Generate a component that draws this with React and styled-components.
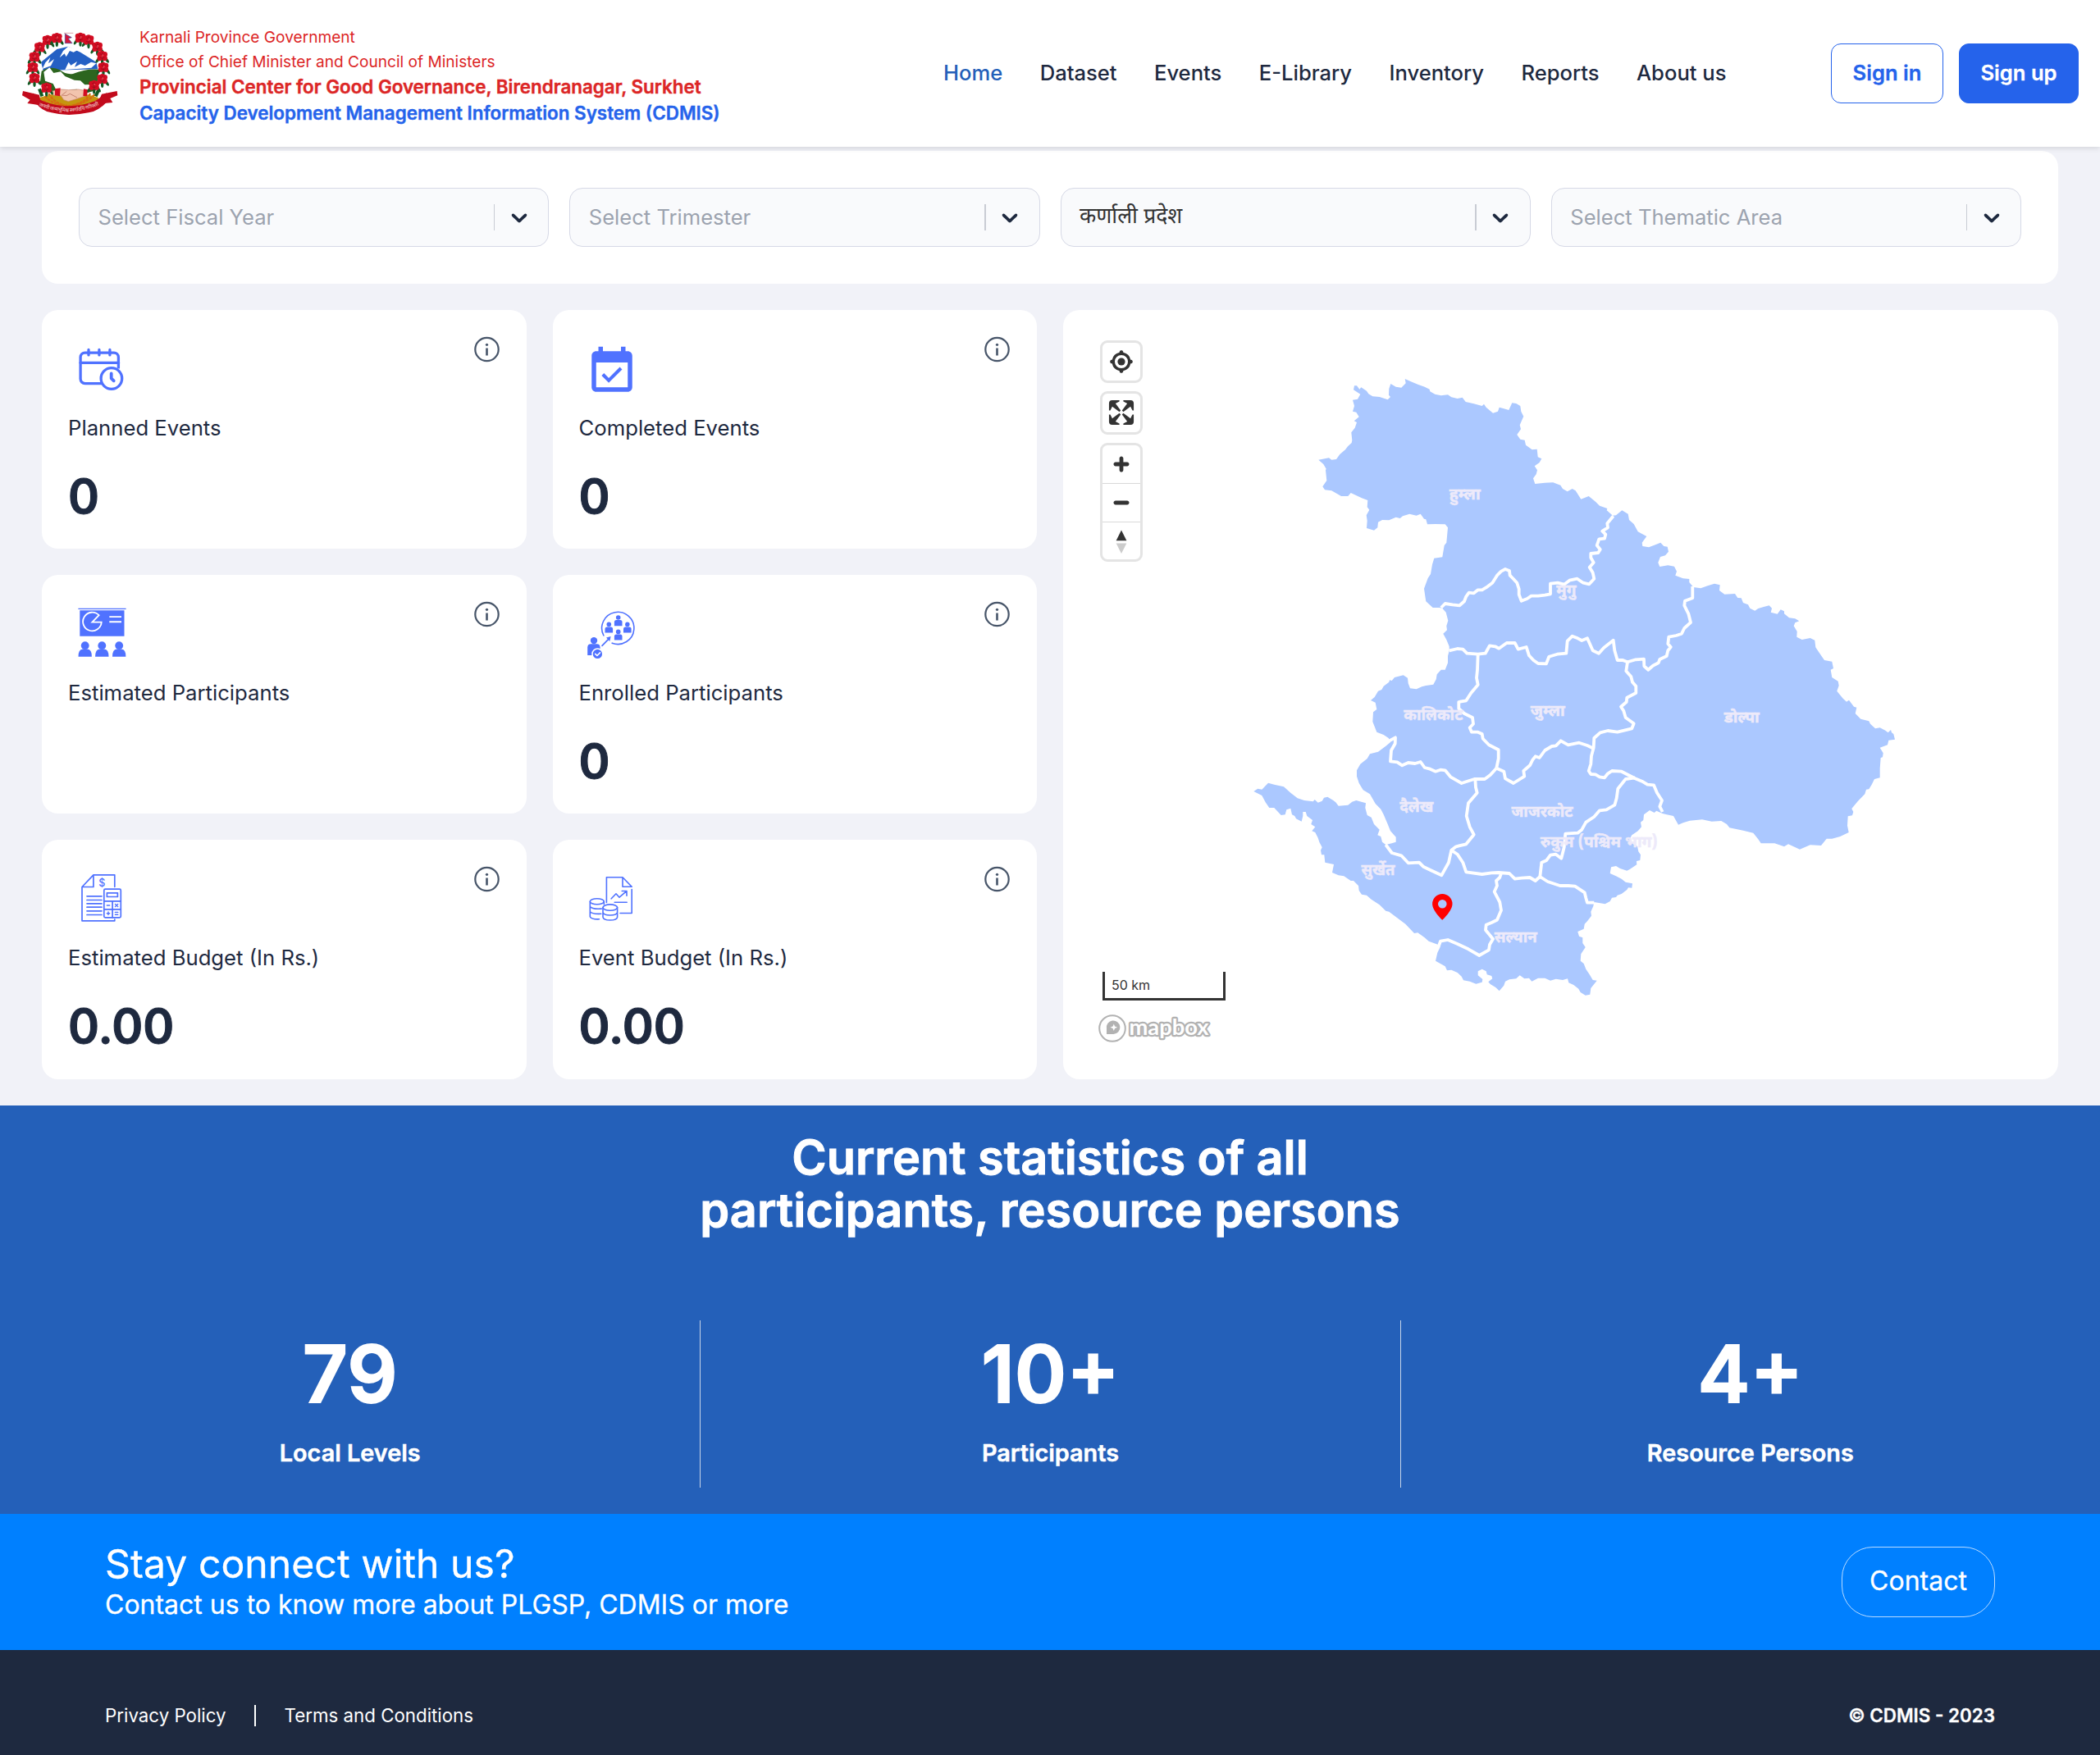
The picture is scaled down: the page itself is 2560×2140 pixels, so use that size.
import React from "react";
import styled, { createGlobalStyle } from "styled-components";

const FONT = `Inter, "Noto Sans Devanagari", "Noto Sans", sans-serif`;
const NAVY = "#1e293f";
const ACCENT = "#5072ff";

const GlobalStyle = createGlobalStyle`
  *, *::before, *::after { box-sizing: border-box; }
  body { margin: 0; background: #f1f2f8; color: ${NAVY}; font-family: ${FONT}; }
  a { color: inherit; text-decoration: none; }
`;

/* ---------- header ---------- */

const Header = styled.header`
  position: relative;
  display: flex;
  align-items: center;
  height: 179px;
  padding: 0 26px 0 16px;
  background: #fff;
  box-shadow: 0 2px 6px rgba(0, 0, 0, 0.12);
`;

const Brand = styled.div`
  display: flex;
  align-items: center;
  gap: 14px;
`;

const BrandText = styled.div`
  padding-top: 6px;
  white-space: nowrap;
`;

const BrandLine = styled.div`
  color: ${(p) => p.$color};
  font-size: ${(p) => (p.$strong ? 22.4 : 19.1)}px;
  line-height: ${(p) => (p.$strong ? 32 : 29.2)}px;
  font-weight: ${(p) => (p.$strong ? 600 : 400)};
  -webkit-text-stroke: ${(p) => (p.$strong ? 0.4 : 0)}px currentColor;
`;

const Nav = styled.nav`
  display: flex;
  gap: 45.4px;
  margin-left: auto;
  margin-right: 127.5px;
`;

const NavLink = styled.a`
  padding-bottom: 2px;
  font-size: 25.6px;
  line-height: 38px;
  font-weight: 500;
  color: ${(p) => (p.$active ? "#2460b9" : NAVY)};
`;

const Actions = styled.div`
  display: flex;
  gap: 19px;
`;

const AuthButton = styled.button`
  height: 73px;
  width: ${(p) => p.$width}px;
  padding: 0 0 2px;
  border: 1.5px solid #2563eb;
  border-radius: 12px;
  background: ${(p) => (p.$filled ? "#2563eb" : "#fff")};
  color: ${(p) => (p.$filled ? "#fff" : "#2563eb")};
  font: 600 25.6px ${FONT};
  -webkit-text-stroke: 0.3px currentColor;
`;

/* ---------- dashboard ---------- */

const Dashboard = styled.main`
  padding: 5px 51px 32px;
`;

const Filters = styled.section`
  display: grid;
  grid-template-columns: repeat(4, 1fr);
  gap: 25px;
  height: 162px;
  padding: 45px;
  border-radius: 20px;
  background: #fff;
`;

const Select = styled.div`
  display: flex;
  align-items: center;
  height: 72px;
  padding: 0 19.5px 0 22.5px;
  border: 1px solid #d6d9e6;
  border-radius: 16px;
  background: #f9fafc;
  color: ${(p) => (p.$filled ? "#333" : "#9ca3af")};
  font-size: ${(p) => (p.$filled ? 26.4 : 25.6)}px;
`;

const SelectText = styled.span`
  flex: 1;
  padding-bottom: 1px;
`;

const SelectBar = styled.span`
  width: 1.5px;
  height: 32px;
  margin-right: 13.5px;
  background: #c9ccd4;
`;

const Grid = styled.section`
  display: grid;
  grid-template-columns: repeat(4, 1fr);
  grid-template-rows: repeat(3, 291.2px);
  gap: 32px;
  margin-top: 32px;
`;

const Card = styled.article`
  display: flex;
  justify-content: space-between;
  align-items: flex-start;
  padding: 32px;
  border-radius: 20px;
  background: #fff;
`;

const CardBody = styled.div`
  padding-top: 9.5px;
`;

const IconSlot = styled.div`
  height: 66px;
  padding-left: 7.5px;
  svg { display: block; overflow: visible; }
`;

const CardLabel = styled.div`
  margin-top: 17px;
  font-size: 25.7px;
  line-height: 38.4px;
`;

const CardValue = styled.div`
  margin-top: 32px;
  font-size: 57.6px;
  line-height: 64px;
  font-weight: 600;
  -webkit-text-stroke: 1px currentColor;
`;

/* ---------- map ---------- */

const MapCard = styled.article`
  position: relative;
  grid-column: 3 / 5;
  grid-row: 1 / 4;
  display: flex;
  flex-direction: column;
  justify-content: space-between;
  padding: 37px 0 43.5px 45px;
  border-radius: 20px;
  background: #fff;
  overflow: hidden;
`;

const MapCanvas = styled.svg`
  position: absolute;
  left: 0;
  top: 0;
`;

const MapControls = styled.div`
  position: relative;
  display: flex;
  flex-direction: column;
  align-items: flex-start;
  gap: 10px;
`;

const ControlGroup = styled.div`
  width: 52px;
  border: 3px solid #e4e4e4;
  border-radius: 9px;
  background: #fff;
`;

const ControlButton = styled.div`
  width: 46px;
  height: 46.4px;
  & + & { border-top: 1px solid #d9d9d9; }
  svg { display: block; }
`;

const MapLegend = styled.div`
  position: relative;
  svg { display: block; margin-left: -3px; }
`;

const ScaleBar = styled.div`
  width: 150px;
  height: 35px;
  margin: 0 0 16px 3px;
  padding-left: 8px;
  border: 3px solid #333;
  border-top: 0;
  color: #333;
  font-size: 16px;
  line-height: 32px;
`;

/* ---------- statistics ---------- */

const Stats = styled.section`
  height: 498px;
  padding-top: 31px;
  background: #2460b9;
  color: #fff;
  text-align: center;
`;

const StatsTitle = styled.h2`
  margin: 0;
  font-size: 57.6px;
  line-height: 64px;
  font-weight: 600;
  -webkit-text-stroke: 1px currentColor;
`;

const StatsRow = styled.div`
  display: grid;
  grid-template-columns: repeat(3, 1fr);
  margin-top: 103px;
`;

const Stat = styled.div`
  height: 204px;
  padding-top: 17px;
  & + & { border-left: 1.5px solid #c5d3e8; }
`;

const StatNumber = styled.div`
  font-size: 96px;
  line-height: 96px;
  font-weight: 600;
  -webkit-text-stroke: 1.8px currentColor;
`;

const StatLabel = styled.div`
  margin-top: 27px;
  font-size: 28.8px;
  line-height: 44px;
  font-weight: 600;
  -webkit-text-stroke: 0.5px currentColor;
`;

/* ---------- contact and footer ---------- */

const ContactBand = styled.section`
  display: flex;
  align-items: center;
  justify-content: space-between;
  height: 166px;
  padding: 0 128px;
  background: #0080ff;
  color: #fff;
`;

const ContactCopy = styled.div`
  padding-bottom: 2px;
  -webkit-text-stroke: 0.3px currentColor;
`;

const ContactTitle = styled.div`
  font-size: 48.2px;
  line-height: 58px;
`;

const ContactText = styled.div`
  font-size: 32px;
  line-height: 42px;
`;

const ContactButton = styled.button`
  width: 187px;
  height: 86px;
  padding: 0 0 2px;
  border: 1.5px solid #b9dbff;
  border-radius: 38px;
  background: transparent;
  color: #fff;
  font: 400 32px ${FONT};
  -webkit-text-stroke: 0.3px currentColor;
`;

const Footer = styled.footer`
  display: flex;
  align-items: center;
  height: 128px;
  padding: 32px 128px 0;
  background: ${NAVY};
  color: #fff;
  font-size: 22.3px;
  line-height: 32px;
`;

const FooterBar = styled.span`
  width: 2px;
  height: 26px;
  margin: 0 34.5px;
  background: #fff;
`;

const Copyright = styled.span`
  margin-left: auto;
  font-size: 22.4px;
  font-weight: 600;
  -webkit-text-stroke: 0.3px currentColor;
`;

/* ---------- emblem ---------- */

const FLOWERS = [
  [126, 57], [160, 49], [97, 83], [78, 118], [72, 156], [78, 196], [122, 231],
  [246, 48], [276, 56], [308, 81], [326, 115], [330, 156], [326, 199], [296, 222],
];

const Flower = ({ x, y }) => (
  <g transform={`translate(${x} ${y})`}>
    <g fill="#125a24">
      <ellipse cx="-16" cy="14" rx="5" ry="13" transform="rotate(35 -16 14)" />
      <ellipse cx="16" cy="14" rx="5" ry="13" transform="rotate(-35 16 14)" />
      <ellipse cx="0" cy="20" rx="5" ry="12" />
    </g>
    <g fill="#d30d22">
      <circle cx="-9" cy="-6" r="10" />
      <circle cx="9" cy="-6" r="10" />
      <circle cx="-9" cy="8" r="9.5" />
      <circle cx="9" cy="8" r="9.5" />
      <circle cx="0" cy="-10" r="9" />
    </g>
    <path d="M-8-8q8 8 16 0M-9 5q9 7 18 0M0-14v26" stroke="#93071a" strokeWidth="2" fill="none" />
    <circle cx="2" cy="-3" r="3" fill="#ef4a55" />
  </g>
);

const Emblem = () => (
  <svg width="140" height="120" viewBox="0 0 420 360">
    <path d="M186 31h34M193 33v36" stroke="#d9a0ab" strokeWidth="3" />
    <path d="M190 34 214 47 202 51 216 68H190z" fill="#d2143a" stroke="#3b4d9b" strokeWidth="2" />
    <path d="M102 137 160 90 201 80 246 101 304 137 310 163 110 168z" fill="#2460c4" />
    <path d="M201 80 183 96 170 121 188 106 194 118 207 96 221 101 236 93zM118 139l18-19-7 22 21-16-12 25-31 11zM190 165l13-28 8 12 23-14-9 20 22-11 16 6 22-13 19 5-18 16z" fill="#fff" />
    <path d="M104 170q36-22 67-4 22 18 48 14 46-20 95-16l-10 76-54 16-110-10-42-30z" fill="#2c651f" />
    <path d="M112 173 133 157 148 177 174 172 190 189 224 203 246 205 262 220 292 219 286 238 243 242 232 236 204 241 156 236 146 216 117 206z" fill="#fff" />
    <path d="M94 268q115-38 218 0l-10 40q-100 36-198-4z" fill="#c5960f" />
    <path d="M116 262q34 35 82 34M298 256q-40 40-104 42M130 252q18 33 58 43M282 252q-20 36-66 43M110 279q38 23 78 20M308 277q-44 25-92 21" fill="none" stroke="#d56b10" strokeWidth="7" strokeDasharray="11 3" />
    <path d="M140 244 174 237 203 239 238 237 262 241 262 262 231 272 202 281 185 275 174 259 146 258z" fill="#f2c4ad" stroke="#c88570" strokeWidth="2" />
    <path d="M196 244l-18 14 17 2 13-7 26 14" fill="none" stroke="#c88570" strokeWidth="3" />
    <path d="M153 235 173 232 171 262 153 259zM258 235l15 3-3 24-14-1z" fill="#d30d22" />
    <path d="M106 262 96 235M302 262l10-22" stroke="#125a24" strokeWidth="12" />
    {FLOWERS.map(([x, y]) => <Flower key={`${x}-${y}`} x={x} y={y} />)}
    <path d="M36 243 96 257 102 296 78 292 52 288 62 275 33 259zM380 243 324 254 306 296 340 287 364 285 355 270 382 259z" fill="#c20a1c" />
    <path d="M72 250Q92 274 112 281 205 315 300 280L342 250 348 278Q310 318 276 322 200 338 140 322 104 316 82 284z" fill="#c20a1c" />
    <path id="motto" d="M94 297Q206 343 322 291" fill="none" />
    <text fill="#efc4c2" fontSize="18.5" fontFamily="Noto Sans Devanagari, Noto Sans, sans-serif" fontWeight="500">
      <textPath href="#motto" textLength="226">जननी जन्मभूमिश्च स्वर्गादपि गरीयसी</textPath>
    </text>
  </svg>
);

/* ---------- icons ---------- */

const Glyph = ({ children }) => (
  <svg width="66" height="66" viewBox="0 0 66 66" fill="none" stroke={ACCENT} strokeLinecap="round" strokeLinejoin="round">
    {children}
  </svg>
);

const PlannedIcon = () => (
  <Glyph>
    <g strokeWidth="3.3">
      <path d="M33.5 47.6H12.6a5.5 5.5 0 0 1-5.5-5.5V15.6a5.5 5.5 0 0 1 5.5-5.5h35.3a5.5 5.5 0 0 1 5.5 5.5V29.5" strokeLinecap="butt" />
      <path d="M7.1 22.3h46.3" />
      <path d="M17 6.5v6.4M29.9 6.5v6.4M42.9 6.5v6.4" />
      <circle cx="44.9" cy="41.5" r="12.8" />
      <path d="M44.7 35.5v5.8l3 3" strokeWidth="3.8" />
    </g>
  </Glyph>
);

const CompletedIcon = () => (
  <svg width="66" height="66" viewBox="0 0 24 24" fill={ACCENT}>
    <path d="M16.53 11.06L15.47 10l-4.88 4.88-2.12-2.12-1.06 1.06L10.59 17l5.94-5.94zM19 3h-1V1h-2v2H8V1H6v2H5c-1.11 0-1.99.9-1.99 2L3 19c0 1.1.89 2 2 2h14c1.1 0 2-.9 2-2V5c0-1.1-.9-2-2-2zm0 16H5V8h14v11z" />
  </svg>
);

const EstimatedIcon = () => (
  <Glyph>
    <path d="M4.4-.6h58.2" strokeWidth="1.4" strokeLinecap="butt" />
    <path d="M6.3 1.2h54.2v31.6H6.3z" fill={ACCENT} stroke="none" />
    <path d="M32.7 15.7A11.3 11.3 0 1 1 29.6 7.2L21.4 15.7z" stroke="#fff" strokeWidth="1.8" strokeLinejoin="miter" />
    <path d="M42.3 9.1H57M42.3 15.3H57" stroke="#fff" strokeWidth="1.9" strokeLinecap="butt" />
    {[12.7, 33.3, 54.2].map((x) => (
      <g key={x} fill={ACCENT} stroke="none">
        <circle cx={x} cy="44.2" r="4.9" />
        <path d={`M${x - 8.2} 57.8q0-9 5.2-9.3h6q5.2 .3 5.2 9.3z`} />
      </g>
    ))}
  </Glyph>
);

const EnrolledIcon = () => (
  <Glyph>
    <path d="M22.9 32A19.6 19.6 0 1 1 33.2 41.2" strokeWidth="1.6" />
    <g fill={ACCENT} stroke="none">
      {[[40.7, 10], [29.3, 18.4], [51.8, 18.4], [40.7, 27.4]].map(([x, y]) => (
        <g key={`${x}-${y}`}>
          <circle cx={x} cy={y} r="2.8" />
          <path d={`M${x - 4.8} ${y + 10.2}v-4.6q0-2.5 2.5-2.5h4.6q2.5 0 2.5 2.5v4.6z`} />
        </g>
      ))}
      <circle cx="11" cy="38.1" r="4.2" />
      <path d="M3.2 56V46.5q0-4.3 4.3-4.3h7q4.1 0 4.1 4.3V56z" />
      <circle cx="15.4" cy="54.4" r="6.4" fill={ACCENT} stroke="#fff" strokeWidth="1.5" />
      <path d="M26 34.6l5.6-1.5-1.3 6z" />
    </g>
    <path d="M21 44.3l8-8.2" strokeWidth="1.7" />
    <path d="M12.7 54.4l2.2 2.1 3.6-3.6" stroke="#fff" strokeWidth="1.6" />
  </Glyph>
);

const EstimatedBudgetIcon = () => (
  <Glyph>
    <g strokeWidth="1.7">
      <path d="M48.8 15.3V.8H22.9L9 15.5v41.3h39.8V55M22.9 .8v14.7H9" />
      <rect x="35.8" y="18.2" width="20.5" height="34.6" rx="1.5" />
      <rect x="39.4" y="22.8" width="13" height="4.7" />
      <path d="M35.8 32.8h20.5M35.8 42.8h20.5M46.1 32.8v20" />
      <path d="M15 26.8h18M15 31.5h18M15 35.8h18M15 40.2h18M15 44.8h18M15 49.5h18" />
      <path d="M39.3 38h3.4M49.5 36.4l3.2 3.2M52.7 36.4l-3.2 3.2M39.3 47.7h3.4M41 46v3.4M49.4 46.4h3.4M49.4 49.2h3.4" strokeWidth="1.4" />
    </g>
    <text x="33.2" y="15" textAnchor="middle" fontSize="12.5" fontWeight="500" fontFamily="Inter, sans-serif" fill={ACCENT} stroke="none">$</text>
  </Glyph>
);

const EventBudgetIcon = () => (
  <Glyph>
    <g strokeWidth="1.6">
      <path d="M26.4 34.5V3.8H46L57.2 15.2H46V3.8M57.2 18.5v29H43" />
      <path d="M32.2 29.8l5.8-6 4 4.4 8.8-7.6M45.2 20.5H51v5.8M36.2 34.2h15" />
      <ellipse cx="14.8" cy="33.2" rx="8.5" ry="3.5" />
      <path d="M6.3 33.2v18.6q2 3.4 11.2 3M23.3 33.2v3.6M6.3 39.5q2.5 3.4 14 2.6M6.3 45.6q2 3.2 13.5 2.7" />
      <ellipse cx="30.8" cy="40.6" rx="8.8" ry="3.7" />
      <path d="M22 40.6v11.7c1 5 16.6 5 17.6 0V40.6M22 46.4c1 4.8 16.6 4.8 17.6 0" />
    </g>
  </Glyph>
);

const InfoIcon = () => (
  <svg width="32" height="32" viewBox="0.5 0 32 32" fill="none" stroke="#475569">
    <circle cx="16" cy="16" r="14.2" strokeWidth="2.2" />
    <path d="M16 14.5v9" strokeWidth="2.6" />
    <circle cx="16" cy="10.3" r="1.6" fill="#475569" stroke="none" />
  </svg>
);

const Chevron = () => (
  <svg width="32" height="32" viewBox="0 0 20 20" fill={NAVY}>
    <path d="M4.516 7.548c0.436-0.446 1.043-0.481 1.576 0l3.908 3.747 3.908-3.747c0.533-0.481 1.141-0.446 1.574 0 0.436 0.445 0.408 1.197 0 1.615-0.406 0.418-4.695 4.502-4.695 4.502-0.217 0.223-0.502 0.335-0.787 0.335s-0.57-0.112-0.789-0.335c0 0-4.287-4.084-4.695-4.502s-0.436-1.17 0-1.615z" />
  </svg>
);

/* ---------- province geometry ----------
   Each list is traced in thirds of a pixel from its own sheet origin. */

const trace = (dx, dy, text) =>
  text.trim().split(/\s+/).map((pair) => {
    const [x, y] = pair.split(",").map(Number);
    return `${((x + dx) / 3).toFixed(1)},${((y + dy) / 3).toFixed(1)}`;
  }).join(" ");

const north = (text) => trace(612, 186, text);
const east = (text) => trace(1662, 546, text);
const south = (text) => trace(642, 1416, text);

const OUTLINE = [
  north(`453,91 462,91 472,104 478,97 498,110 505,121 520,130 545,132 575,142 585,132 579,125 580,102 586,84 605,95
    625,98 641,82 638,66 660,76 685,86 710,95 728,104 730,112 748,122 770,127 795,124 808,133 830,138 848,134 860,150
    890,157 920,165 927,158 935,170 960,191 978,185 983,170 1000,175 1018,180 1030,154 1045,156 1060,165 1063,185
    1072,203 1058,235 1062,250 1048,270 1060,287 1076,290 1080,308 1103,325 1121,323 1124,352 1138,358 1130,372
    1112,385 1122,400 1118,415 1107,430 1114,450 1150,446 1180,445 1207,455 1215,468 1232,478 1250,468 1262,475
    1282,506 1310,495 1335,515 1350,530`),
  east(`328,180 326,187 348,206 360,205 382,187 404,200 408,222 425,237 440,265 472,282 455,305 457,318 480,322 500,314
    523,305 535,318 548,320 552,338 540,352 522,357 514,378 520,393 550,388 573,392 582,410 577,425 605,436 628,438
    628,450 643,468 670,472 695,463 720,455 740,460 738,480 757,494 795,492 805,507 818,508 825,525 843,532 850,545
    868,554 880,546 900,540 920,535 930,545 926,560 950,566 962,550 975,556 975,565 993,580 1015,583 1030,592
    1015,598 1010,610 1022,630 1021,650 1040,660 1070,654 1087,662 1090,688 1105,710 1122,735 1150,740 1155,765
    1145,770 1150,798 1172,812 1175,828 1168,848 1190,875 1203,887 1212,881 1230,905 1240,908 1235,930 1255,950
    1285,958 1290,968 1308,985 1325,982 1345,992 1355,1000 1365,990 1368,1000 1375,1005 1380,1025 1357,1028
    1353,1045 1325,1055 1337,1075 1335,1090 1328,1092 1325,1130 1325,1165 1305,1170 1295,1190 1285,1207 1275,1208
    1270,1225 1245,1250 1222,1278 1228,1290 1224,1303 1208,1306 1206,1340 1211,1365 1180,1380 1150,1388 1130,1388
    1110,1413 1070,1411 1032,1427 990,1408 975,1417 940,1405 890,1405 880,1390 862,1367 825,1358 775,1348 765,1335
    745,1323 710,1325 675,1318 630,1322 605,1330 588,1337 570,1305 530,1296 508,1286 500,1293 483,1284 462,1300
    460,1320 450,1328 453,1345 440,1360 418,1375 410,1390 425,1410 438,1415 442,1435 450,1447 448,1467 435,1470
    436,1483 410,1500`),
  south(`1420,635 1395,627 1380,618 1362,622 1358,645 1380,655 1400,665 1415,677 1440,682 1438,698 1425,697 1420,705
    1400,720 1385,725 1380,732 1365,734 1358,747 1340,757 1300,750 1297,765 1288,785 1290,800 1275,820 1265,830
    1262,848 1240,858 1245,875 1258,880 1258,900 1268,915 1252,940 1250,965 1262,975 1270,995 1283,1015 1295,1035
    1310,1037 1298,1052 1288,1065 1285,1088 1268,1091 1250,1080 1243,1067 1225,1053 1207,1045 1203,1030 1185,1035
    1160,1031 1140,1037 1120,1028 1095,1028 1072,1040 1062,1028 1045,1030 1028,1018 1015,1030 990,1033 975,1040
    970,1055 953,1075 940,1062 920,1050 913,1042 928,1030 925,1020 908,1015 905,1003 890,995 875,1003 875,1018
    892,1032 890,1043 868,1049 845,1040 822,1036 815,1022 800,1008 778,998 762,1000 755,985 720,965 727,935 738,912
    728,905 695,893 680,880 655,862 642,864 610,830 580,808 550,785 538,782 515,760 485,740 468,725 450,722 440,708
    438,690 420,672 410,672 385,655 365,652 342,642 348,612 316,605 313,577 303,577 300,560 305,550 295,530 290,515
    280,495 268,490 280,475 265,465 270,450 250,435 245,420 235,420 235,435 230,455 210,445 205,435 195,430 190,407
    175,412 170,430 155,432 130,405 112,405 98,385 85,360 55,345 70,335 85,338 108,314 130,320 165,328 190,350
    215,370 240,378 272,382 278,375 290,386 305,380 312,368 325,365 345,377 355,385 365,398 400,395 415,383 430,378
    465,388 463,405 470,432 485,440 495,465 515,485 508,505 520,510 525,530 538,540 560,535 575,530 575,512 555,490
    545,465 530,430 520,410 500,390 480,355 455,340 440,315 432,290 432,268 445,245 470,225 480,208 510,200 540,178
    555,165 548,150 530,138 505,128 498,110 490,90 492,55 505,45 500,20 483,12`),
  north(`527,1230 540,1208 553,1203 560,1190 580,1175 582,1168 590,1170 600,1158 632,1150 648,1160 650,1180 657,1198
    680,1201 700,1192 715,1188 742,1184 752,1165 755,1147 770,1130 785,1130 795,1105 795,1080 800,1060 800,1045
    790,1020 778,998 792,985 790,970 796,950 788,920 775,905 765,903 740,903 715,880 712,860 708,833 722,795 732,780
    738,745 745,722 775,718 782,675 790,665 795,610 785,598 750,597 720,598 715,580 708,578 695,560 680,566 655,560
    630,568 620,576 605,572 580,583 555,582 540,590 538,610 525,620 498,612 500,585 497,565 508,545 500,535 502,510
    480,502 440,483 430,495 405,495 370,475 345,472 337,460 352,438 348,400 350,395 340,378 322,362 360,355 370,362
    387,360 400,342 420,325 430,312 443,300 445,290 442,262 455,245 462,225 452,220 470,205 460,188 447,185 453,165
    447,143 465,140 475,122 450,106`),
].join(" ");

const BORDERS = [
  [
    north(`770,903 785,888 812,892 838,895 855,880 862,862 872,848 890,850 905,838 920,838 940,826 958,812 975,785 990,770
      1005,762 1020,768 1022,785 1035,798 1048,812 1055,835 1055,855 1064,878 1085,870 1100,860 1125,860 1150,857 1170,853
      1170,815 1197,812 1220,818 1240,803 1268,797 1290,812 1312,817 1330,797 1325,775 1313,755 1328,738 1318,720 1318,705
      1345,702 1352,690 1340,675 1348,652 1368,650 1372,635`),
    east("310,263 330,250 328,235 350,208"),
  ].join(" "),
  [
    north(`800,1060 830,1053 850,1055 865,1070 905,1073 932,1070 948,1042 968,1045 982,1052 1010,1032 1040,1032 1052,1055
      1082,1047 1092,1078 1108,1095 1125,1107 1155,1108 1165,1082 1195,1073 1228,1070 1232,1025 1250,1007 1270,1015
      1285,1023 1305,1015 1325,1060 1347,1070`),
    east(`315,690 350,662 355,700 365,735 385,735 402,742 432,733 462,731 463,757 478,770 495,755 515,745 520,732 545,720
      550,700 560,687 550,675 553,650 580,645 600,638 610,618 633,597 625,565 610,535 612,518 640,508 640,465`),
  ].join(" "),
  [
    north("905,1073 903,1130 900,1160 905,1185 880,1215 862,1243 835,1248 835,1272"),
    south("825,60 855,75 858,98 845,112 852,128 875,128 890,135 893,152 915,175 950,193 950,225 943,260"),
  ].join(" "),
  east(`402,742 397,775 415,795 420,815 433,830 433,855 400,872 398,888 378,905 388,920 395,945 425,967 418,985 390,992
    365,998 330,993 302,1000 280,1020 278,1055 270,1085 268,1115 260,1140 268,1152 285,1153 300,1162 318,1165 330,1150
    345,1140 380,1142 405,1155 430,1168 455,1178 475,1190 498,1192 510,1220 528,1248 520,1270 530,1290`),
  south(`943,260 970,272 975,298 1005,315 1045,290 1042,270 1065,250 1075,230 1085,217 1100,222 1120,195 1145,180 1160,178
    1178,160 1205,175 1245,167 1275,177 1298,188`),
  south(`545,163 573,148 572,170 558,195 555,235 580,238 598,250 620,240 645,243 665,237 680,258 700,263 720,272 738,266
    755,268 775,292 815,315 845,305 862,300 900,300 920,285 943,260`),
  south("865,300 867,330 872,350 840,388 833,435 845,475 860,503 832,538 795,547 778,560"),
  south(`538,540 560,570 595,580 620,607 660,605 675,620 700,632 742,652 755,628 768,605 778,560 800,575 820,605 832,640
    890,648 925,643 950,642 990,645 1010,665 1035,662 1065,660 1085,672 1102,657 1130,675 1175,690 1205,690 1230,692
    1265,715 1270,735 1275,752 1300,752`),
  south(`1102,657 1108,605 1125,598 1140,578 1160,575 1180,590 1190,550 1195,500 1240,497 1255,485 1270,458 1300,438
    1320,415 1345,412 1375,395 1382,370 1387,335 1415,300 1450,295`),
  south(`960,645 955,660 942,672 945,690 935,712 955,750 960,780 945,815 925,825 905,833 903,852 930,885 918,905 915,925
    880,945 840,922 800,903 765,888 738,893 732,910`),
];

const DISTRICTS = [
  ["हुम्ला", 1785.7, 609, 38],
  ["मुगु", 1909.3, 726, 24],
  ["कालिकोट", 1747.3, 878, 72],
  ["जुम्ला", 1886.7, 872.7, 42],
  ["डोल्पा", 2123.3, 880.7, 43],
  ["दैलेख", 1726.7, 989.7, 41],
  ["जाजरकोट", 1880, 995.7, 75],
  ["रुकुम (पश्चिम भाग)", 1949.3, 1032.8, 143],
  ["सुर्खेत", 1680, 1066.7, 41],
  ["सल्यान", 1847.7, 1149.3, 52],
];

const ProvinceMap = () => (
  <MapCanvas width="1213" height="938" viewBox="0 0 1213 938">
    <polygon points={OUTLINE} fill="#abc8ff" />
    <g fill="none" stroke="#fff" strokeWidth="3.8" strokeLinejoin="round">
      {BORDERS.map((points) => <polyline key={points} points={points} />)}
    </g>
    <g transform="translate(-1296 -378)">
      <g
        fill="#edeafa"
        stroke="#edeafa"
        strokeWidth="0.5"
        fontSize="19.5"
        fontWeight="700"
        textAnchor="middle"
        fontFamily="Noto Sans Devanagari, Noto Sans, sans-serif"
      >
        {DISTRICTS.map(([name, x, y, w]) => (
          <text key={name} x={x} y={y} textLength={w} lengthAdjust="spacingAndGlyphs">{name}</text>
        ))}
      </g>
      <path fillRule="evenodd" fill="#f00" d="M1758.3 1090a12.2 12.2 0 0 0-12.2 12.2c0 8.3 12.2 19.6 12.2 19.6s12.2-11.3 12.2-19.6a12.2 12.2 0 0 0-12.2-12.2zm0 6.9a5.3 5.3 0 1 1 0 10.6 5.3 5.3 0 0 1 0-10.6z" />
    </g>
  </MapCanvas>
);

const CONTROLS = [
  [{ box: 20, paths: [["M10 4C9 4 9 5 9 5v.1A5 5 0 0 0 5.1 9H5s-1 0-1 1 1 1 1 1h.1A5 5 0 0 0 9 14.9v.1s0 1 1 1 1-1 1-1v-.1a5 5 0 0 0 3.9-3.9h.1s1 0 1-1-1-1-1-1h-.1A5 5 0 0 0 11 5.1V5s0-1-1-1zm0 2.5a3.5 3.5 0 1 1 0 7 3.5 3.5 0 1 1 0-7z"], ["M10 8a2 2 0 1 1 0 4 2 2 0 0 1 0-4z"]] }],
  [{ box: 29, paths: [["M24 16v5.5c0 1.75-.75 2.5-2.5 2.5H16v-1l3-1.5-4-5.5 1-1 5.5 4 1.5-3h1zM6 16l1.5 3 5.5-4 1 1-4 5.5 3 1.5v1H7.5C5.75 24 5 23.25 5 21.5V16h1zm7-11v1l-3 1.5 4 5.5-1 1-5.5-4L6 13H5V7.5C5 5.75 5.75 5 7.5 5H13zm11 2.5c0-1.75-.75-2.5-2.5-2.5H16v1l3 1.5-4 5.5 1 1 5.5-4 1.5 3h1V7.5z"]] }],
  [
    { box: 29, paths: [["M14.5 8.5c-.75 0-1.5.75-1.5 1.5v3h-3c-.75 0-1.5.75-1.5 1.5S9.25 16 10 16h3v3c0 .75.75 1.5 1.5 1.5S16 19.75 16 19v-3h3c.75 0 1.5-.75 1.5-1.5S19.75 13 19 13h-3v-3c0-.75-.75-1.5-1.5-1.5z"]] },
    { box: 29, paths: [["M10 13c-.75 0-1.5.75-1.5 1.5S9.25 16 10 16h9c.75 0 1.5-.75 1.5-1.5S19.75 13 19 13h-9z"]] },
    { box: 29, paths: [["M10.5 14l4-8 4 8h-8z"], ["M10.5 16l4 8 4-8h-8z", "#ccc"]] },
  ],
];

const MapboxLogo = () => (
  <svg width="146" height="36" viewBox="0 0 146 36">
    <circle cx="18" cy="18" r="15.8" fill="#fff" stroke="#b2b2b2" strokeWidth="2" />
    <path d="M11 25v-6.5a8.3 8.3 0 1 1 8.3 6.5z" fill="#b2b2b2" />
    <path d="M19.8 12.5l1.2 3.1 3.1 1.2-3.1 1.2-1.2 3.1-1.2-3.1-3.1-1.2 3.1-1.2z" fill="#fff" />
    <text x="38.5" y="26" textLength="97" lengthAdjust="spacingAndGlyphs" fontFamily="Lato, sans-serif" fontWeight="700" fontSize="27" fill="#fff" stroke="#b2b2b2" strokeWidth="4.4" strokeLinejoin="round" paintOrder="stroke">mapbox</text>
  </svg>
);

/* ---------- page ---------- */

const NAV_ITEMS = ["Home", "Dataset", "Events", "E-Library", "Inventory", "Reports", "About us"];

const FILTERS = [
  { text: "Select Fiscal Year" },
  { text: "Select Trimester" },
  { text: "कर्णाली प्रदेश", filled: true },
  { text: "Select Thematic Area" },
];

const CARDS = [
  { icon: PlannedIcon, label: "Planned Events", value: "0" },
  { icon: CompletedIcon, label: "Completed Events", value: "0" },
  { icon: EstimatedIcon, label: "Estimated Participants", value: "" },
  { icon: EnrolledIcon, label: "Enrolled Participants", value: "0" },
  { icon: EstimatedBudgetIcon, label: "Estimated Budget (In Rs.)", value: "0.00" },
  { icon: EventBudgetIcon, label: "Event Budget (In Rs.)", value: "0.00" },
];

const STATS = [["79", "Local Levels"], ["10+", "Participants"], ["4+", "Resource Persons"]];

export default function App() {
  return (
    <>
      <GlobalStyle />
      <Header>
        <Brand>
          <Emblem />
          <BrandText>
            <BrandLine $color="#dc2626">Karnali Province Government</BrandLine>
            <BrandLine $color="#dc2626">Office of Chief Minister and Council of Ministers</BrandLine>
            <BrandLine $color="#dc2626" $strong>Provincial Center for Good Governance, Birendranagar, Surkhet</BrandLine>
            <BrandLine $color="#2563eb" $strong>Capacity Development Management Information System (CDMIS)</BrandLine>
          </BrandText>
        </Brand>
        <Nav>
          {NAV_ITEMS.map((item, i) => <NavLink key={item} href="#" $active={i === 0}>{item}</NavLink>)}
        </Nav>
        <Actions>
          <AuthButton $width={137}>Sign in</AuthButton>
          <AuthButton $width={146} $filled>Sign up</AuthButton>
        </Actions>
      </Header>

      <Dashboard>
        <Filters>
          {FILTERS.map((f) => (
            <Select key={f.text} $filled={f.filled}>
              <SelectText>{f.text}</SelectText>
              <SelectBar />
              <Chevron />
            </Select>
          ))}
        </Filters>
        <Grid>
          <MapCard>
            <ProvinceMap />
            <MapControls>
              {CONTROLS.map((group, g) => (
                <ControlGroup key={g}>
                  {group.map((button, b) => (
                    <ControlButton key={b}>
                      <svg width="46" height="46" viewBox={`0 0 ${button.box} ${button.box}`} fillRule="evenodd">
                        {button.paths.map(([d, fill]) => <path key={d} d={d} fill={fill || "#333"} />)}
                      </svg>
                    </ControlButton>
                  ))}
                </ControlGroup>
              ))}
            </MapControls>
            <MapLegend>
              <ScaleBar>50 km</ScaleBar>
              <MapboxLogo />
            </MapLegend>
          </MapCard>
          {CARDS.map(({ icon: Icon, label, value }) => (
            <Card key={label}>
              <CardBody>
                <IconSlot><Icon /></IconSlot>
                <CardLabel>{label}</CardLabel>
                <CardValue>{value}</CardValue>
              </CardBody>
              <InfoIcon />
            </Card>
          ))}
        </Grid>
      </Dashboard>

      <Stats>
        <StatsTitle>Current statistics of all<br />participants, resource persons</StatsTitle>
        <StatsRow>
          {STATS.map(([number, label]) => (
            <Stat key={label}>
              <StatNumber>{number}</StatNumber>
              <StatLabel>{label}</StatLabel>
            </Stat>
          ))}
        </StatsRow>
      </Stats>

      <ContactBand>
        <ContactCopy>
          <ContactTitle>Stay connect with us?</ContactTitle>
          <ContactText>Contact us to know more about PLGSP, CDMIS or more</ContactText>
        </ContactCopy>
        <ContactButton>Contact</ContactButton>
      </ContactBand>

      <Footer>
        <a href="#">Privacy Policy</a>
        <FooterBar />
        <a href="#">Terms and Conditions</a>
        <Copyright>© CDMIS - 2023</Copyright>
      </Footer>
    </>
  );
}
